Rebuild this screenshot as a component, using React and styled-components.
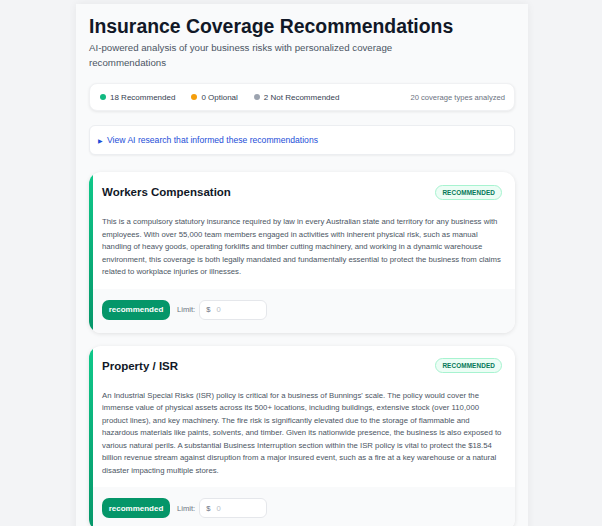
import React from "react";
import styled, { createGlobalStyle } from "styled-components";

const Global = createGlobalStyle`
  html, body { margin: 0; padding: 0; background: #f3f4f6; }
  body { font-family: "Liberation Sans", Arial, sans-serif; }
  * { box-sizing: border-box; }
`;

const Page = styled.div`
  padding: 4px 74px 0 76px;
  min-height: 526px;
`;

const Container = styled.div`
  width: 452px;
  background: #f9fafb;
  box-shadow: 0 0 8px rgba(0, 0, 0, 0.06);
  padding: 10px 13px 20px;
  display: flex;
  flex-direction: column;
`;

const Title = styled.h1`
  margin: 0;
  font-size: 19.4px;
  line-height: 24px;
  font-weight: 700;
  color: #111827;
`;

const Subtitle = styled.p`
  margin: 3px 0 0;
  font-size: 9.7px;
  line-height: 14.5px;
  color: #4b5563;
  max-width: 310px;
`;

const Stats = styled.div`
  margin-top: 13px;
  height: 28px;
  background: #fff;
  border-radius: 8px;
  box-shadow: 0 1px 3px rgba(0, 0, 0, 0.08);
  border: 1px solid #f0f1f3;
  display: flex;
  align-items: center;
  padding: 0 9px 0 10px;
  gap: 16px;
  font-size: 8px;
  color: #374151;
`;

const Stat = styled.span`
  display: flex;
  align-items: center;
  gap: 4px;
`;

const Dot = styled.span`
  width: 6px;
  height: 6px;
  border-radius: 50%;
  background: ${(p) => p.color};
`;

const Analyzed = styled.span`
  margin-left: auto;
  color: #6b7280;
  font-size: 7.6px;
`;

const Research = styled.div`
  margin-top: 14px;
  height: 30px;
  background: #fff;
  border-radius: 6px;
  border: 1px solid #eceef1;
  box-shadow: 0 1px 2px rgba(0, 0, 0, 0.05);
  display: flex;
  align-items: center;
  padding: 0 8px;
  font-size: 8.6px;
  color: #1d4ed8;
  gap: 4px;
`;

const Tri = styled.span`
  font-size: 6px;
  color: #1d4ed8;
`;

const Card = styled.div`
  margin-top: ${(p) => p.mt}px;
  border-radius: 12px;
  background: #fff;
  box-shadow: 0 1px 4px rgba(0, 0, 0, 0.1);
  overflow: hidden;
  display: flex;
`;

const Accent = styled.div`
  width: 4px;
  flex: none;
  background: linear-gradient(180deg, #10c98a, #059669);
`;

const CardMain = styled.div`
  flex: 1;
  min-width: 0;
`;

const CardBody = styled.div`
  padding: 13px 13px 0 9px;
`;

const CardHead = styled.div`
  display: flex;
  justify-content: space-between;
  align-items: center;
  height: 14px;
`;

const CardTitle = styled.h2`
  margin: 0;
  font-size: 11.5px;
  font-weight: 700;
  color: #111827;
`;

const Badge = styled.span`
  font-size: 6.4px;
  font-weight: 700;
  color: #047857;
  background: #ecfdf5;
  border: 1px solid #a7f3d0;
  border-radius: 8px;
  padding: 3px 6px;
  letter-spacing: 0.1px;
`;

const Desc = styled.p`
  margin: 17px 0 0;
  font-size: 7.75px;
  line-height: 12.5px;
  color: #4b5563;
  padding-bottom: 10px;
`;

const Footer = styled.div`
  background: #f9fafb;
  padding: 11px 9px 13px;
  display: flex;
  align-items: center;
`;

const Btn = styled.button`
  height: 20px;
  width: 68px;
  padding: 0;
  background: #059669;
  color: #fff;
  border: none;
  border-radius: 7px;
  font-family: inherit;
  font-size: 8px;
  font-weight: 700;
`;

const Label = styled.span`
  margin: 0 4px 0 7px;
  font-size: 7.6px;
  color: #6b7280;
`;

const Input = styled.div`
  width: 68px;
  height: 20px;
  border: 1px solid #e5e7eb;
  border-radius: 6px;
  background: #fff;
  display: flex;
  align-items: center;
  padding: 0 6px;
  gap: 6px;
  font-size: 7.6px;
  color: #6b7280;
`;

const Ph = styled.span`
  color: #b6bcc6;
`;

const cards = [
  {
    title: "Workers Compensation",
    text:
      "This is a compulsory statutory insurance required by law in every Australian state and territory for any business with employees. With over 55,000 team members engaged in activities with inherent physical risk, such as manual handling of heavy goods, operating forklifts and timber cutting machinery, and working in a dynamic warehouse environment, this coverage is both legally mandated and fundamentally essential to protect the business from claims related to workplace injuries or illnesses.",
  },
  {
    title: "Property / ISR",
    text:
      "An Industrial Special Risks (ISR) policy is critical for a business of Bunnings' scale. The policy would cover the immense value of physical assets across its 500+ locations, including buildings, extensive stock (over 110,000 product lines), and key machinery. The fire risk is significantly elevated due to the storage of flammable and hazardous materials like paints, solvents, and timber. Given its nationwide presence, the business is also exposed to various natural perils. A substantial Business Interruption section within the ISR policy is vital to protect the $18.54 billion revenue stream against disruption from a major insured event, such as a fire at a key warehouse or a natural disaster impacting multiple stores.",
  },
];

export default function App() {
  return (
    <>
      <Global />
      <Page>
        <Container>
          <Title>Insurance Coverage Recommendations</Title>
          <Subtitle>
            AI-powered analysis of your business risks with personalized coverage recommendations
          </Subtitle>
          <Stats>
            <Stat>
              <Dot color="#10b981" />18 Recommended
            </Stat>
            <Stat>
              <Dot color="#f59e0b" />0 Optional
            </Stat>
            <Stat>
              <Dot color="#9ca3af" />2 Not Recommended
            </Stat>
            <Analyzed>20 coverage types analyzed</Analyzed>
          </Stats>
          <Research>
            <Tri>▶</Tri>View AI research that informed these recommendations
          </Research>
          {cards.map((c, i) => (
            <Card key={i} mt={i === 0 ? 17 : 13}>
              <Accent />
              <CardMain>
                <CardBody>
                  <CardHead>
                    <CardTitle>{c.title}</CardTitle>
                    <Badge>RECOMMENDED</Badge>
                  </CardHead>
                  <Desc>{c.text}</Desc>
                </CardBody>
                <Footer>
                  <Btn>recommended</Btn>
                  <Label>Limit:</Label>
                  <Input>
                    $<Ph>0</Ph>
                  </Input>
                </Footer>
              </CardMain>
            </Card>
          ))}
        </Container>
      </Page>
    </>
  );
}
